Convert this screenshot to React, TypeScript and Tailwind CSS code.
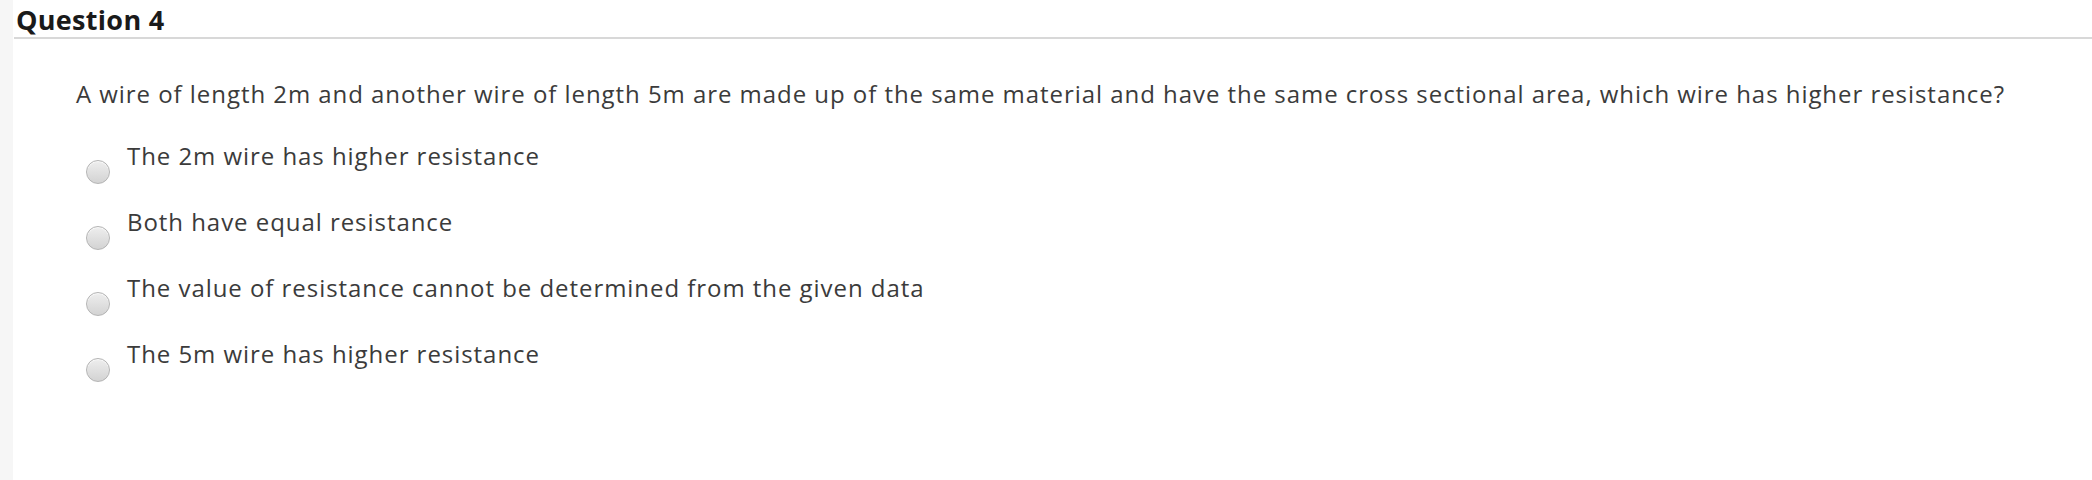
import React from "react";

const options = [
  "The 2m wire has higher resistance",
  "Both have equal resistance",
  "The value of resistance cannot be determined from the given data",
  "The 5m wire has higher resistance",
];

function Radio() {
  return (
    <span className="mt-[20px] block h-[24px] w-[24px] shrink-0 rounded-full border border-[#b4b4b4] bg-linear-to-b from-[#eeeeee] to-[#d3d3d3] shadow-[inset_0_1px_1px_rgba(255,255,255,0.8)]" />
  );
}

export default function App() {
  return (
    <div
      className="flex h-[480px] w-full bg-white text-[#3b3b3b]"
      style={{ fontFamily: '"Open Sans", "Noto Sans", sans-serif' }}
    >
      <div className="w-[13px] shrink-0 bg-[#f6f6f6]" />
      <div className="flex-1 pl-[1px]">
        <h2 className="mt-[2px] h-[37px] border-b-2 border-[#d8d8d8] pl-[2px] text-[27px] leading-[36px] font-bold tracking-[0.3px] text-[#1a1a1a]">
          Question 4
        </h2>
        <p className="mt-[39px] pl-[62px] text-[24px] leading-[32px] tracking-[0.95px]">
          A wire of length 2m and another wire of length 5m are made up of the same material and have the same cross sectional area, which wire has higher resistance?
        </p>
        <div className="mt-[30px] flex flex-col gap-[22px] pl-[72px]">
          {options.map((o) => (
            <label key={o} className="flex items-start gap-[17px]">
              <Radio />
              <span className="text-[24px] leading-[32px] tracking-[0.95px]">{o}</span>
            </label>
          ))}
        </div>
      </div>
    </div>
  );
}
